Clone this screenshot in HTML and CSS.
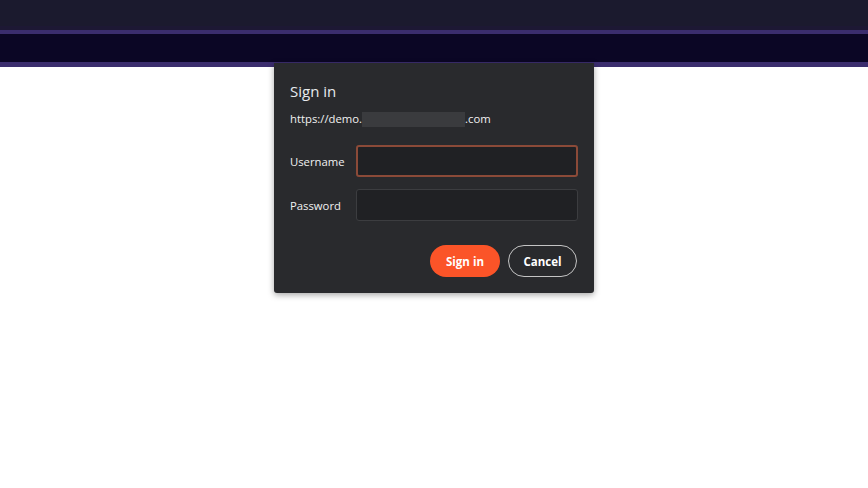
FILE: index.html
```html
<!DOCTYPE html>
<html lang="en">
<head>
    <meta charset="UTF-8">
    <meta name="viewport" content="width=device-width, initial-scale=1.0">
    <title>Sign in</title>
    <link rel="stylesheet" href="styles.css">
</head>
<body>
    <header class="site-header">
        <div class="top-bar"></div>
        <div class="nav-band"></div>
    </header>

    <main class="page"></main>

    <!-- Browser auth prompt -->
    <div class="auth-dialog">
        <h1 class="auth-title">Sign in</h1>
        <p class="auth-origin">https://demo.<span class="redacted"></span>.com</p>

        <form class="auth-form">
            <div class="field-row">
                <label for="username">Username</label>
                <input type="text" id="username" class="focused">
            </div>
            <div class="field-row">
                <label for="password">Password</label>
                <input type="password" id="password">
            </div>
            <div class="button-row">
                <button type="button" class="btn btn-primary">Sign in</button>
                <button type="button" class="btn btn-secondary">Cancel</button>
            </div>
        </form>
    </div>
</body>
</html>
```

FILE: styles.css
```css
/* Basic Reset */
* {
    margin: 0;
    padding: 0;
    box-sizing: border-box;
}

body {
    font-family: 'Open Sans', 'Noto Sans', sans-serif;
    background: #ffffff;
    min-height: 100vh;
}

/* Header */
.top-bar {
    height: 30px;
    background: #1b1a2e;
    border-bottom: 4px solid #1d1834;
}

.nav-band {
    height: 37px;
    background: #0b0625;
    border-top: 4px solid #3b2d6e;
    border-bottom: 5px solid #3b2d6e;
}

/* Dialog */
.auth-dialog {
    position: absolute;
    top: 63px;
    left: 274px;
    width: 320px;
    background: #292a2d;
    color: #e8eaed;
    padding: 18px 16px 16px;
    border-radius: 0 0 3px 3px;
    box-shadow: 0 2px 6px rgba(0,0,0,0.35);
}

.auth-title {
    font-size: 15px;
    font-weight: 400;
    line-height: 20px;
    color: #e8eaed;
}

.auth-origin {
    margin-top: 10px;
    font-size: 11.3px;
    line-height: 16px;
    color: #f1f1f1;
    display: flex;
    align-items: center;
}

.redacted {
    display: inline-block;
    width: 103px;
    height: 15px;
    background: #3a3b3e;
}

.auth-form {
    margin-top: 18px;
}

.field-row {
    display: flex;
    align-items: center;
    margin-bottom: 12px;
}

.field-row label {
    width: 66px;
    font-size: 11.3px;
    color: #f1f1f1;
}

.field-row input {
    width: 222px;
    height: 32px;
    background: #202124;
    border: 1px solid #3c3d40;
    border-radius: 3px;
    color: #e8eaed;
    font-size: 13px;
    padding: 0 8px;
    outline: none;
}

.field-row input.focused {
    border: 2px solid #8b4a38;
}

.button-row {
    display: flex;
    justify-content: flex-end;
    gap: 8px;
    margin-top: 24px;
    padding-right: 1px;
}

.btn {
    height: 32px;
    border-radius: 16px;
    font-family: inherit;
    font-size: 11.5px;
    font-weight: 700;
    cursor: pointer;
}

.btn-primary {
    width: 70px;
    background: #fb5428;
    color: #ffffff;
    border: none;
}

.btn-secondary {
    width: 69px;
    background: transparent;
    color: #ffffff;
    border: 1px solid #c4c4c4;
}
```
